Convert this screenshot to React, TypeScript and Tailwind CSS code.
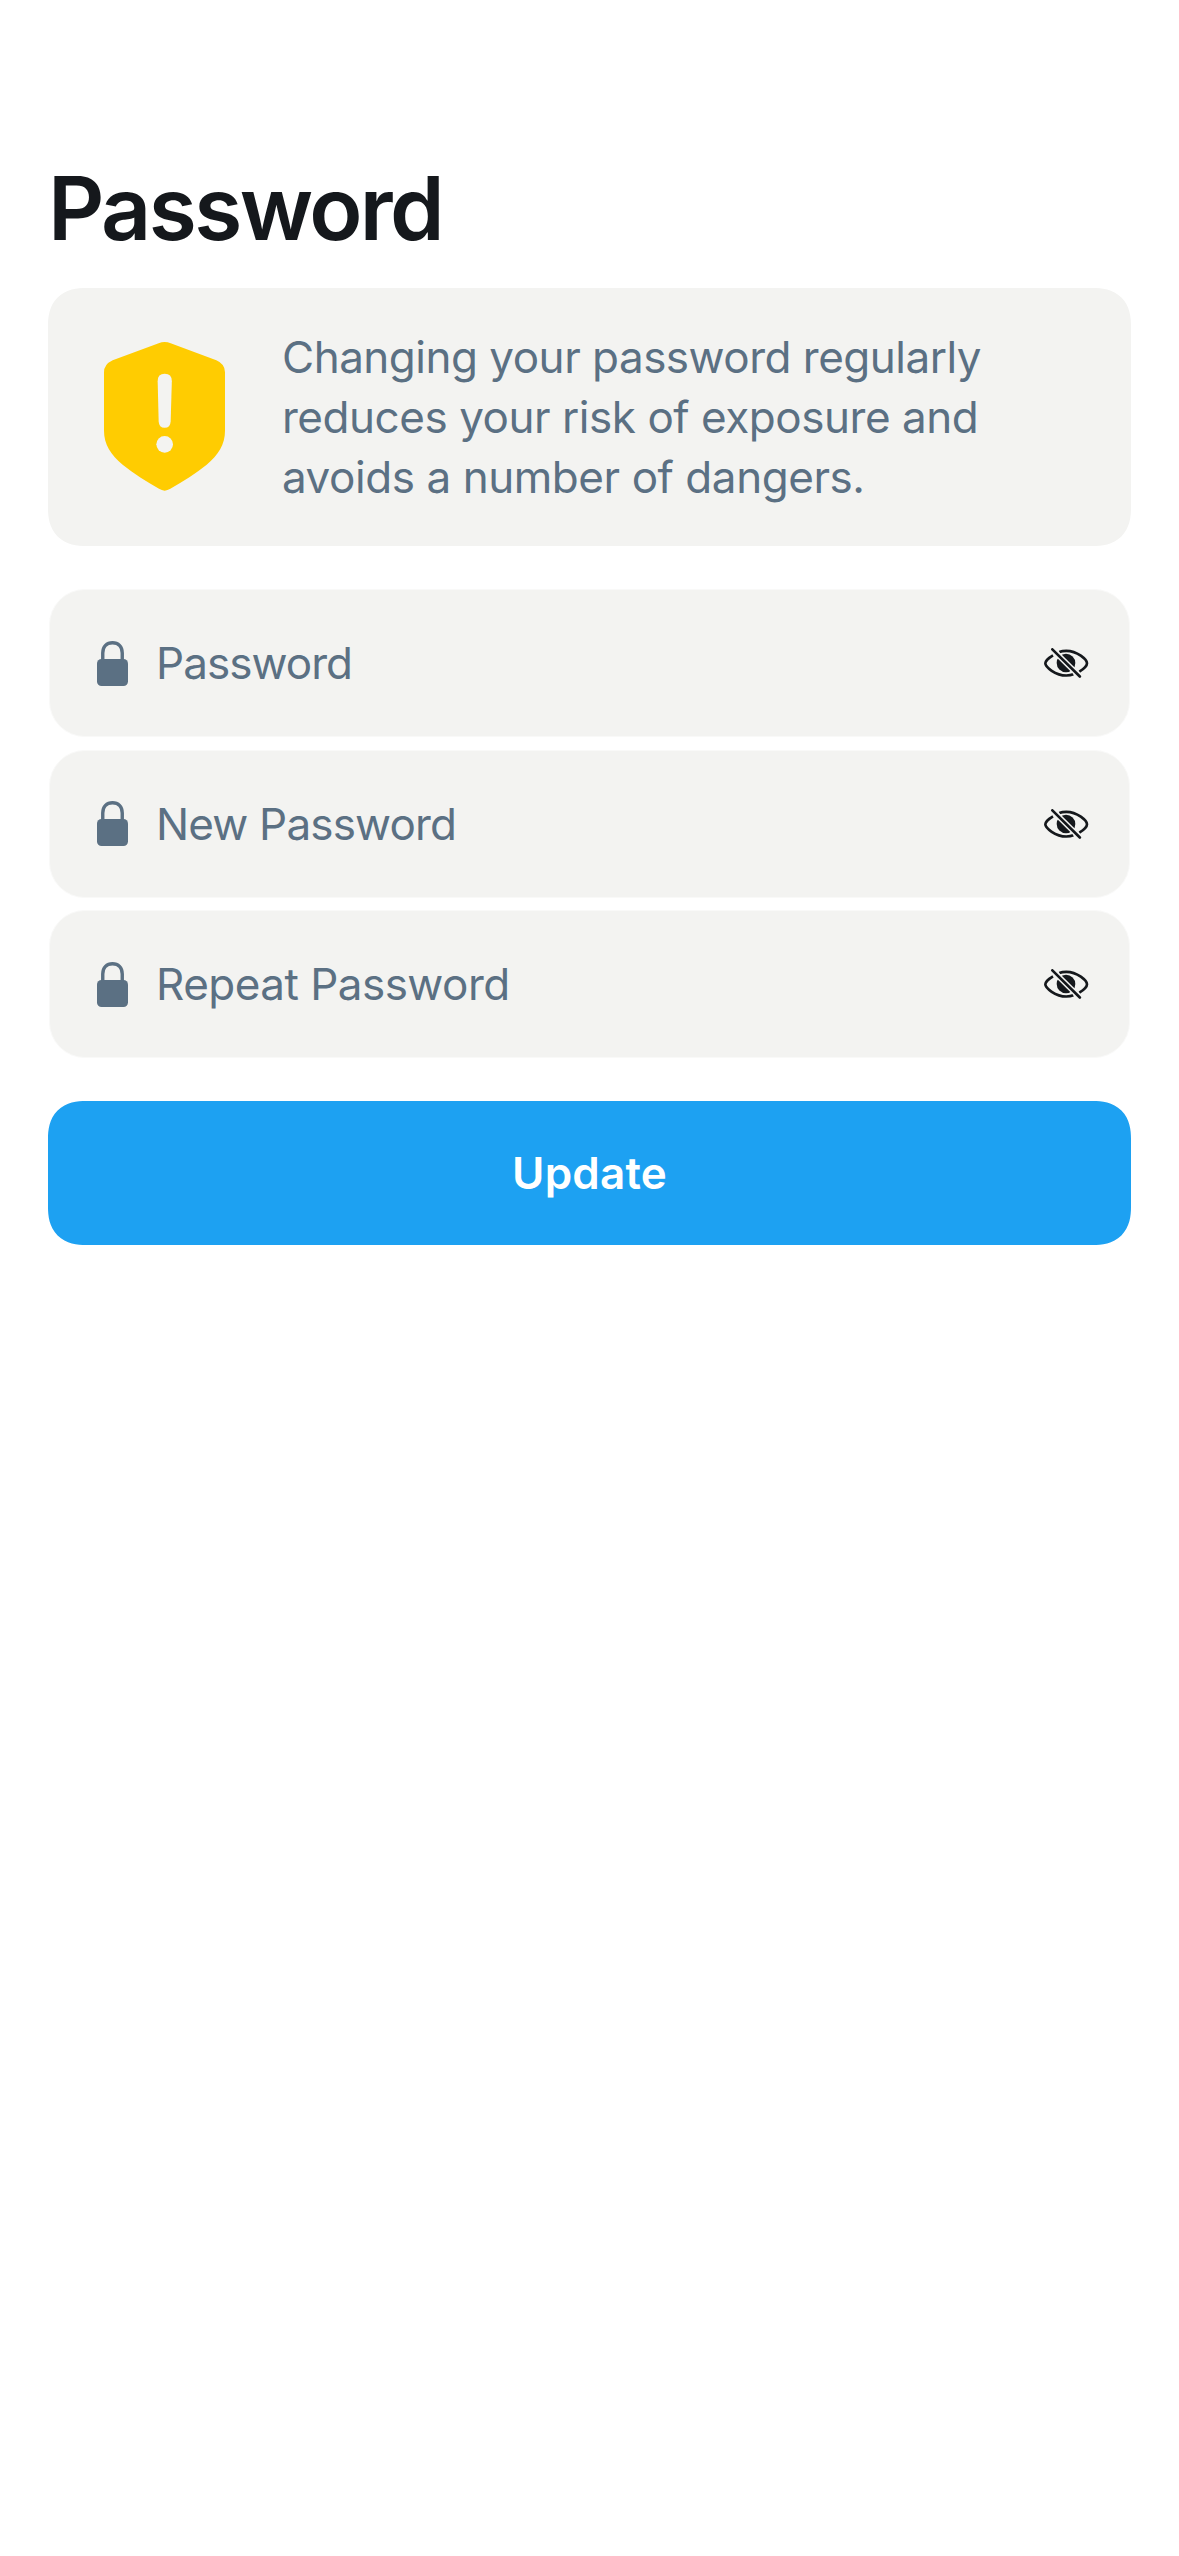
const FONT = "font-['Inter','Liberation_Sans',sans-serif]";

function ShieldAlert() {
  return (
    <svg className="mb-[2px] h-[149px] w-[121px] shrink-0" viewBox="72 65.5 363 447" fill="none">
      <path
        fill="#ffcc01"
        d="M236 69 Q254 62 272 69 L409 120 Q435 131 435 156 V332 C435 373 415 404 380 434 C347 461 308 484 271 506 Q254 517 237 506 C200 484 161 461 128 434 C93 404 72 373 72 332 V156 Q72 132 98 120 Z"
      />
      <path
        fill="#f3f3f1"
        d="M233 183 Q233 161 254 161 Q275.500 161 275.500 183 L272 304 Q271 323 254 323 Q237 323 236 304 Z"
      />
      <circle cx="254" cy="372.500" r="25" fill="#f3f3f1" />
    </svg>
  );
}

function Lock() {
  return (
    <svg className="h-[45px] w-[31px] shrink-0" viewBox="0 0 31 45" fill="none">
      <path d="M5.750 20 V12 C5.750 5.500 9.800 1.700 15.500 1.700 C21.200 1.700 25.250 5.500 25.250 12 V20" stroke="#5b7083" strokeWidth="3.400" />
      <rect x="0" y="18" width="31" height="27" rx="4.500" fill="#5b7083" />
    </svg>
  );
}

function EyeOff() {
  return (
    <svg className="h-[30px] w-[45px] shrink-0" viewBox="0 0 135 90" fill="none">
      <path
        d="M27 22 C13 30 4 41 4 46 C4 57 34 82.500 67 82.500 C75 82.500 82 81.500 88 79"
        stroke="#15181c"
        strokeWidth="8"
      />
      <path
        d="M46 12 C52 9.500 60 8.500 67 8.500 C100 8.500 129 35 129 46 C129 52 121 62 106 71"
        stroke="#15181c"
        strokeWidth="8"
      />
      <circle cx="66" cy="45" r="28" fill="#15181c" />
      <path d="M25 4 L108 86" stroke="#f3f3f1" strokeWidth="17" />
      <path d="M25 4 L107.500 85.500" stroke="#15181c" strokeWidth="8" strokeLinecap="round" />
    </svg>
  );
}

const FIELDS = [
  { label: "Password", tracking: "tracking-[-0.95px]" },
  { label: "New Password", tracking: "tracking-[-0.82px]" },
  { label: "Repeat Password", tracking: "tracking-[-0.52px]" },
];

export default function App() {
  return (
    <main className={`flex min-h-[2556px] w-[1179px] flex-col bg-white px-12 pt-[155px] ${FONT}`}>
      <h1 className="text-[87.5px] leading-[106px] font-semibold tracking-[-2.6px] text-[#15181c]">
        Password
      </h1>

      <section className="mt-[27px] flex h-[258px] items-center rounded-[38px] bg-[#f3f3f1] pl-14 [corner-shape:superellipse(1.25)]">
        <ShieldAlert />
        <p className="ml-[57px] text-[44px] leading-[60px] tracking-[-0.5px] whitespace-nowrap text-[#5b7083]">
          Changing your password regularly
          <br />
          <span className="tracking-[-0.46px]">reduces your risk of exposure and</span>
          <br />
          <span className="tracking-[-0.44px]">avoids a number of dangers.</span>
        </p>
      </section>

      <form className="mt-[43px] flex flex-col">
        <div className="mx-px flex flex-col gap-[12.5px]">
          {FIELDS.map(({ label, tracking }) => (
            <label
              key={label}
              className="flex h-[148px] items-center rounded-[36px] border border-[#f9f9f8] bg-[#f3f3f1] pr-10 pl-[47px]"
            >
              <Lock />
              <span className={`ml-7 flex-1 text-[44px] leading-[60px] text-[#5b7083] ${tracking}`}>
                {label}
              </span>
              <EyeOff />
            </label>
          ))}
        </div>

        <button
          type="button"
          className="mt-[43px] h-36 rounded-[38px] bg-[#1da1f2] text-[44px] leading-[60px] font-semibold tracking-[0.18px] text-white [corner-shape:superellipse(1.25)]"
        >
          Update
        </button>
      </form>
    </main>
  );
}
